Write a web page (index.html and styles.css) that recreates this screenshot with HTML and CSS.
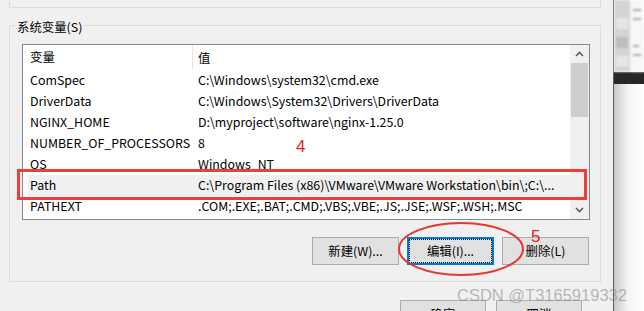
FILE: index.html
```html
<!DOCTYPE html>
<html>
<head>
    <meta charset="utf-8">
    <link rel="stylesheet" href="styles.css">
</head>
<body>
    <div class="screen">
        <div class="dialog">
            <div class="prev-group"></div>

            <fieldset class="group">
                <legend>系统变量(S)</legend>

                <div class="listview">
                    <div class="list-main">
                        <div class="list-head">
                            <span class="col-name">变量</span>
                            <span class="col-value">值</span>
                        </div>
                        <div class="row"><span class="col-name">ComSpec</span><span class="col-value">C:\Windows\system32\cmd.exe</span></div>
                        <div class="row"><span class="col-name">DriverData</span><span class="col-value">C:\Windows\System32\Drivers\DriverData</span></div>
                        <div class="row"><span class="col-name">NGINX_HOME</span><span class="col-value">D:\myproject\software\nginx-1.25.0</span></div>
                        <div class="row"><span class="col-name">NUMBER_OF_PROCESSORS</span><span class="col-value">8</span></div>
                        <div class="row"><span class="col-name">OS</span><span class="col-value">Windows_NT</span></div>
                        <div class="row selected"><span class="col-name">Path</span><span class="col-value">C:\Program Files (x86)\VMware\VMware Workstation\bin\;C:\...</span></div>
                        <div class="row"><span class="col-name">PATHEXT</span><span class="col-value">.COM;.EXE;.BAT;.CMD;.VBS;.VBE;.JS;.JSE;.WSF;.WSH;.MSC</span></div>
                    </div>
                    <div class="scrollbar">
                        <span class="arrow">
                            <svg width="9" height="6" viewBox="0 0 9 6"><path d="M1 5 L4.5 1.5 L8 5" fill="none" stroke="#606060" stroke-width="1.6"/></svg>
                        </span>
                        <span class="thumb"></span>
                        <span class="track"></span>
                        <span class="arrow">
                            <svg width="9" height="6" viewBox="0 0 9 6"><path d="M1 1 L4.5 4.5 L8 1" fill="none" stroke="#606060" stroke-width="1.6"/></svg>
                        </span>
                    </div>
                </div>

                <div class="actions">
                    <button class="btn">新建(W)...</button>
                    <button class="btn focused">编辑(I)...</button>
                    <button class="btn">删除(L)</button>
                </div>
            </fieldset>

            <div class="dialog-actions">
                <button class="btn">确定</button>
                <button class="btn">取消</button>
            </div>
        </div>

        <div class="edge"></div>

        <div class="behind">
            <div class="behind-top">
                <div class="behind-side">
                    <span class="blk light"></span>
                    <span class="blk"></span>
                    <span class="blk light"></span>
                </div>
                <div class="behind-page">
                    <span class="ln"></span>
                    <span class="ln"></span>
                    <span class="ln short"></span>
                    <span class="ln"></span>
                </div>
            </div>
            <div class="behind-bar"><span class="ln"></span></div>
            <div class="behind-shade"></div>
        </div>

        <!-- red marks drawn over the screenshot -->
        <svg class="marks" width="644" height="311" viewBox="0 0 644 311">
            <rect x="18.5" y="170.5" width="567" height="28" fill="none" stroke="#f23b3b" stroke-width="3"/>
            <ellipse cx="461" cy="249" rx="62" ry="26" fill="none" stroke="#e8362f" stroke-width="2"/>
            <text x="296" y="152" class="mark-num">4</text>
            <text x="531" y="242" class="mark-num">5</text>
        </svg>

        <div class="watermark">CSDN @T3165919332</div>
    </div>
</body>
</html>
```

FILE: styles.css
```css
:root {
    --face: #f0f0f0;
    --group-line: #dcdcdc;
    --list-line: #828790;
    --btn: #e1e1e1;
    --btn-line: #adadad;
    --focus: #0078d7;
    --select: #f0f0f0;
}

* {
    box-sizing: border-box;
}

body {
    margin: 0;
    background: var(--face);
}

.screen {
    position: relative;
    display: flex;
    width: 644px;
    height: 311px;
    overflow: hidden;
    font-family: "Noto Sans CJK SC", sans-serif;
    font-size: 12.4px;
    color: #000;
}

.dialog {
    width: 613px;
    flex: none;
    background: var(--face);
}

.prev-group {
    width: 592px;
    height: 8px;
    margin-left: 9px;
    border: 1px solid var(--group-line);
    border-top: none;
}

.group {
    width: 592px;
    margin: 7px 0 0 9px;
    padding: 8px 10px 16px 12px;
    border: 1px solid var(--group-line);
}

.group legend {
    margin-left: -6px;
    padding: 4px 1px 0;
    line-height: 17px;
}

.listview {
    display: flex;
    height: 176px;
    border: 1px solid var(--list-line);
    background: #fff;
}

.list-main {
    flex: 1;
}

.list-head {
    display: flex;
    height: 25px;
    align-items: center;
}

.list-head .col-name {
    width: 170px;
    height: 25px;
    padding-left: 7px;
    line-height: 25px;
    border-right: 1px solid #e5e5e5;
}

.col-value {
    padding-left: 5px;
    white-space: nowrap;
}

.row {
    display: flex;
    height: 21px;
    margin-left: 5px;
    line-height: 21px;
}

.row .col-name {
    width: 165px;
    padding-left: 2px;
}

.row.selected {
    background: var(--select);
}

.scrollbar {
    width: 19px;
    display: flex;
    flex-direction: column;
    background: var(--face);
}

.arrow {
    height: 18px;
    display: flex;
    align-items: center;
    justify-content: center;
}

.thumb {
    height: 54px;
    margin: 0 1px;
    background: #cdcdcd;
}

.track {
    flex: 1;
}

.actions {
    display: flex;
    justify-content: flex-end;
    gap: 8px;
    margin: 17px 1px 0 0;
}

.btn {
    width: 87px;
    height: 28px;
    padding: 0;
    font: inherit;
    color: #000;
    background: var(--btn);
    border: 1px solid var(--btn-line);
}

.btn.focused {
    border: 2px solid var(--focus);
    outline: 1px dotted #000;
    outline-offset: -3px;
}

.dialog-actions {
    display: flex;
    justify-content: flex-end;
    gap: 10px;
    margin: 18px 31px 0 0;
}

.dialog-actions .btn {
    width: 86px;
}

.edge {
    width: 1px;
    flex: none;
    background: #5e5e5e;
}

.behind {
    flex: 1;
    display: flex;
    flex-direction: column;
    background: #fff;
}

.behind-top {
    display: flex;
    height: 72px;
    filter: blur(0.8px);
}

.behind-side {
    width: 16px;
    display: flex;
    flex-direction: column;
    gap: 8px;
    padding: 18px 2px 0;
    background: #d4d4d4;
}

.blk {
    height: 11px;
    background: #bdbdbd;
}

.blk.light {
    background: #e6e6e6;
}

.behind-page {
    flex: 1;
    display: flex;
    flex-direction: column;
    gap: 7px;
    padding: 9px 3px 0;
    background: #f7f7f7;
}

.ln {
    height: 2px;
    background: #a8a8a8;
}

.ln.short {
    width: 6px;
    margin-top: 18px;
}

.behind-bar {
    height: 12px;
    padding: 5px 2px 0;
    background: #272727;
}

.behind-bar .ln {
    background: #8a8a8a;
}

.behind-shade {
    flex: 1;
    background: linear-gradient(to right, #c9c9c9, #f4f4f4 14px, #fff);
}

.marks {
    position: absolute;
    left: 0;
    top: 0;
}

.mark-num {
    font-family: "Liberation Sans", sans-serif;
    font-size: 17px;
    fill: #e52222;
}

.watermark {
    position: absolute;
    left: 457px;
    top: 286px;
    font-family: "Liberation Sans", sans-serif;
    font-size: 16.5px;
    color: rgba(130, 130, 130, 0.55);
    white-space: nowrap;
}
```
